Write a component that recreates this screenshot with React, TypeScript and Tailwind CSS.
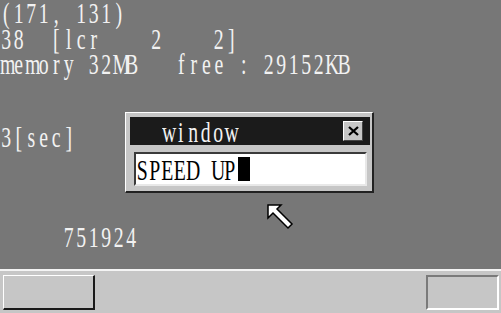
import React from "react";

function Mono({ text, className = "" }: { text: string; className?: string }) {
  return (
    <div className={"flex whitespace-pre origin-top-left scale-x-[0.658] " + className}>
      {Array.from(text).map((c, i) => (
        <span key={i} className="inline-block w-[19px] shrink-0 text-center">
          {c}
        </span>
      ))}
    </div>
  );
}

export default function App() {
  return (
    <div className="w-[501px] h-[313px] overflow-hidden flex flex-col bg-[#777777] font-['Liberation_Serif',serif]">
      {/* desktop */}
      <div className="relative h-[269px] shrink-0 text-[#f2f2f2]">
        <div className="text-[30px] leading-[25.5px]">
          <Mono text="(171, 131)" />
          <Mono text="38  [lcr    2    2]" />
          <Mono text="memory 32MB   free : 29152KB" />
          <Mono text="3[sec]" className="mt-[47px]" />
          <Mono text="     751924" className="mt-[75px]" />
        </div>

        {/* window */}
        <div className="absolute left-[125px] top-[112px] w-[249px] h-[81px] bg-[#c6c6c6] border-t border-l border-t-white border-l-white border-b-2 border-r-2 border-b-[#222] border-r-[#222] pl-[4px] pt-[4px] flex flex-col">
          <div className="w-[240px] h-[28px] bg-[#1b1b1b] flex items-start justify-between">
            <div className="pl-[32px] pt-[1px] text-[#f2f2f2] text-[30px] leading-[28px]">
              <Mono text="window" />
            </div>
            <div className="mt-[4px] mr-[7px] w-[20px] h-[20px] bg-[#c6c6c6] border-t border-l border-t-white border-l-white border-b border-r border-b-[#444] border-r-[#444] flex items-center justify-center">
              <svg width="11" height="10" viewBox="0 0 11 10">
                <path d="M1 1 L10 9 M10 1 L1 9" stroke="#000" strokeWidth="2.3" fill="none" />
              </svg>
            </div>
          </div>
          <div className="ml-[4px] mt-[7px] w-[233px] h-[34px] bg-white border-t-2 border-l-2 border-t-[#3a3a3a] border-l-[#3a3a3a] border-b-2 border-r-2 border-b-[#e8e8e8] border-r-[#e8e8e8] overflow-hidden">
            <div className="flex items-start text-black text-[30px] leading-[30px]">
              <div className="mt-[1px]">
                <Mono text="SPEED UP" />
              </div>
            </div>
          </div>
        </div>
        {/* text cursor block */}
        <div className="absolute left-[238px] top-[157px] w-[12px] h-[24px] bg-black" />

        {/* mouse cursor */}
        <svg className="absolute left-[266px] top-[203px]" width="30" height="30" viewBox="0 0 30 30">
          <path d="M2 2 L15 2 L11 6 L26 21 L22 25 L7 10 L2 15 Z" fill="#fff" stroke="#000" strokeWidth="1.5" strokeLinejoin="miter" />
        </svg>
      </div>

      {/* taskbar */}
      <div className="flex-1 bg-[#c6c6c6] border-t-2 border-t-[#f4f4f4] flex items-start justify-between pt-[4px] pl-[3px] pr-[2px]">
        <div className="w-[92px] h-[35px] bg-[#c6c6c6] border-t border-l border-t-white border-l-white border-b-2 border-r-2 border-b-[#1a1a1a] border-r-[#1a1a1a]" />
        <div className="w-[73px] h-[35px] bg-[#c6c6c6] border-t-2 border-l-2 border-t-[#7a7a7a] border-l-[#7a7a7a] border-b-2 border-r-2 border-b-white border-r-white" />
      </div>
    </div>
  );
}
